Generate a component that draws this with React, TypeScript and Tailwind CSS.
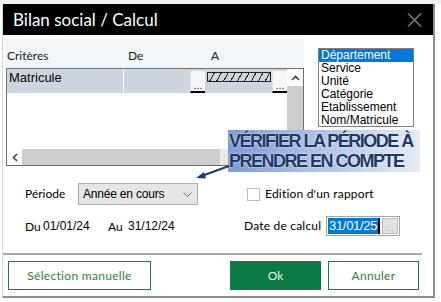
const UI = "font-['Lato','Noto_Sans',sans-serif]";
const NARROW = "font-['Liberation_Sans_Narrow','Liberation_Sans',Arial,sans-serif]";

const CRITERES = ['Département', 'Service', 'Unité', 'Catégorie', 'Etablissement', 'Nom/Matricule'];

function DotsButton() {
  return (
    <div className="mt-[2px] h-[22px] w-[15px] bg-[#f6f6f6] border-l border-[#e2e2e2] border-b-2 border-b-black flex items-end justify-center text-[11px] leading-[12px] text-[#333]">
      ...
    </div>
  );
}

export default function App() {
  return (
    <div className="relative w-[441px] h-[302px] bg-white overflow-hidden font-['Liberation_Sans',Arial,sans-serif] text-black">
      <div className="h-[4px] bg-[#f0f0f0]" />
      <div className="ml-[2px] w-[433px] h-[294px] flex flex-col border-l border-l-[#d8d8d8] border-r-2 border-r-[#8e8e8e] border-b-2 border-b-[#8e8e8e]">
        {/* Title bar */}
        <div className="h-[31px] shrink-0 bg-black flex items-center justify-between pl-[10px] pr-[11px]">
          <span className={`${UI} text-white text-[17px] leading-none`}>Bilan social / Calcul</span>
          <svg width="15" height="14" viewBox="0 0 15 14">
            <path d="M1 0.5 L14 13.5 M14 0.5 L1 13.5" stroke="#7a7a7a" strokeWidth="1.6" />
          </svg>
        </div>

        {/* Grid + criteria list */}
        <div className="flex mt-[4px]">
          <div className="ml-[2px] w-[299px]">
            <div className={`${UI} h-[29px] bg-[#f2f5f8] flex pt-[10px] text-[12px] leading-[14px] text-[#1a1a1a]`}>
              <span className="pl-[2px] w-[123px]">Critères</span>
              <span className="w-[83px]">De</span>
              <span>A</span>
            </div>
            <div className="ml-[1px] w-[298px] h-[98px] border border-[#6e6e6e] flex flex-col">
              <div className="flex flex-1">
                <div className="w-[280px]">
                  <div className="h-[24px] bg-[#cdd6dc] flex">
                    <div className={`${NARROW} w-[116px] pl-[2px] pt-[2px] text-[13px] leading-[14px]`}>Matricule</div>
                    <div className="w-[1px] bg-white" />
                    <div className="w-[66px]" />
                    <DotsButton />
                    <div className="w-[67px] pl-[2px] pt-[3px]">
                      <div className="h-[10px] w-[64px] border border-[#222] bg-[repeating-linear-gradient(120deg,transparent_0px,transparent_5px,#222_5px,#222_6px)]" />
                    </div>
                    <DotsButton />
                  </div>
                </div>
                <div className="w-[16px] flex flex-col">
                  <div className="h-[17px] bg-white flex items-center justify-center">
                    <svg width="9" height="6" viewBox="0 0 9 6">
                      <path d="M1 5 L4.5 1.5 L8 5" stroke="#444" strokeWidth="1.6" fill="none" />
                    </svg>
                  </div>
                  <div className="flex-1 bg-[#cdcdcd]" />
                </div>
              </div>
              <div className="h-[16px] flex">
                <div className="w-[15px] bg-white flex items-center justify-center">
                  <svg width="6" height="9" viewBox="0 0 6 9">
                    <path d="M5 1 L1.5 4.5 L5 8" stroke="#444" strokeWidth="1.6" fill="none" />
                  </svg>
                </div>
                <div className="w-[198px] bg-[#cdcdcd]" />
                <div className="flex-1 bg-[#e8e8e8]" />
                <div className="w-[16px] bg-white" />
              </div>
            </div>
          </div>

          <div className="ml-[14px] mt-[9px] w-[96px] h-[79px] border border-[#828282] bg-white">
            {CRITERES.map((c, i) => (
              <div
                key={c}
                className={`${NARROW} h-[13px] pl-[2px] text-[12px] leading-[13px] ${i === 0 ? 'bg-[#0078d7] text-white' : ''}`}
              >
                {c}
              </div>
            ))}
          </div>
        </div>

        {/* Période */}
        <div className="mt-[17px] h-[22px] flex items-center pl-[22px]">
          <span className={`${UI} w-[53px] text-[12px]`}>Période</span>
          <div className="w-[120px] h-[22px] bg-[#e5e5e5] border border-[#adadad] flex items-center justify-between pl-[4px] pr-[5px]">
            <span className="text-[12px] tracking-[-0.2px]">Année en cours</span>
            <svg width="9" height="5" viewBox="0 0 9 5">
              <path d="M0.5 0.5 L4.5 4.5 L8.5 0.5" stroke="#666" strokeWidth="1" fill="none" />
            </svg>
          </div>
          <div className="ml-[49px] w-[13px] h-[13px] border border-[#bdbdbd] bg-white" />
          <span className={`${UI} ml-[5px] text-[12px] tracking-[0.2px]`}>Edition d'un rapport</span>
        </div>

        {/* Dates */}
        <div className="mt-[11px] h-[20px] flex items-center pl-[22px] text-[12px]">
          <span className={`${UI} w-[18px] pt-[2px]`}>Du</span>
          <span className="w-[65px]">01/01/24</span>
          <span className={`${UI} w-[20px] pt-[2px]`}>Au</span>
          <span className="w-[116px]">31/12/24</span>
          <span className={`${UI} w-[82px] tracking-[0.2px]`}>Date de calcul</span>
          <div className="w-[74px] h-[20px] border border-[#a5a5a5] bg-white flex items-center pl-[1px] pr-[1px]">
            <span className="h-[16px] leading-[16px] bg-[#0078d7] text-white px-[1px] text-[13px] tracking-[-0.3px]">31/01/25</span>
            <span className="w-[2px] h-[16px] bg-black" />
            <div className="ml-auto w-[16px] h-[16px] bg-[#e1e1e1] border border-[#bcbcbc] flex items-end justify-center text-[9px] leading-[10px] text-[#9a9a9a]">
              ...
            </div>
          </div>
        </div>

        <div className="mt-[17px] h-[2px] w-[419px] bg-[#a9a9a9]" />

        {/* Buttons */}
        <div className={`${UI} mt-[6px] h-[29px] flex pl-[5px] text-[12px]`}>
          <button className="w-[143px] h-full border border-[#1c7a48] text-[#2f7c3c] tracking-[0.3px]">
            Sélection manuelle
          </button>
          <button className="ml-[79px] w-[91px] h-full bg-[#0c7a46] text-[#e8f5ec]">Ok</button>
          <button className="ml-[7px] w-[91px] h-full border border-[#1c7a48] text-[#2f7c3c] tracking-[0.3px]">
            Annuler
          </button>
        </div>
      </div>

      {/* Annotation callout */}
      <div className="absolute left-[228px] top-[130px] w-[192px] h-[42px] bg-linear-to-r from-[#7f9dd4] to-[#e6ecf6] pl-[1px] pt-[1px]">
        <div className="text-[18px] leading-[20px] font-bold tracking-[-1.5px] text-[#1f3864] [text-shadow:0_0_2px_#ffffff] whitespace-nowrap">
          VÉRIFIER LA PÉRIODE À
          <br />
          PRENDRE EN COMPTE
        </div>
      </div>
      <svg className="absolute left-[194px] top-[162px]" width="36" height="20" viewBox="0 0 36 20">
        <path d="M35 4 L9 13.5" stroke="#1f3d6b" strokeWidth="2" />
        <path d="M2 16 L10 10 L12 16.5 Z" fill="#1f3d6b" />
      </svg>
    </div>
  );
}
